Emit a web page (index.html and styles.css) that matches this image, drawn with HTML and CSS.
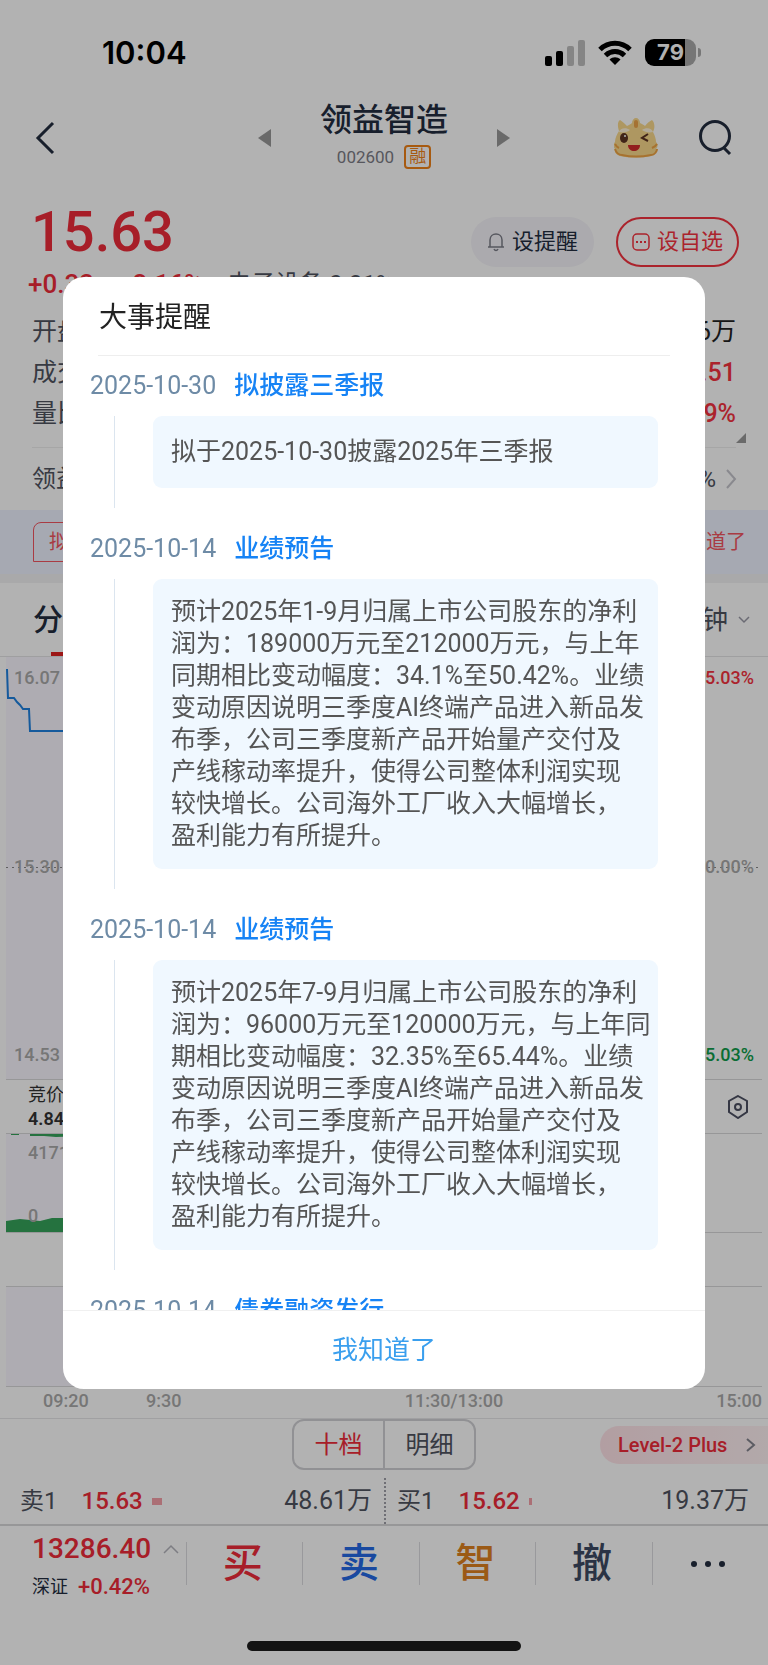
FILE: index.html
```html
<!DOCTYPE html>
<html lang="zh-CN">
<head>
  <meta charset="UTF-8">
  <meta name="viewport" content="width=device-width, initial-scale=1.0">
  <title>领益智造 002600</title>
  <link rel="stylesheet" href="styles.css">
</head>

<body>
  <div class="page">
    <!-- 状态栏 -->
    <div class="status">
      <span class="time">10:04</span>
      <div class="status-icons">
        <svg width="40" height="26" viewBox="0 0 40 26">
          <rect x="0" y="16" width="7" height="10" rx="2"/>
          <rect x="11" y="11" width="7" height="15" rx="2"/>
          <rect x="22" y="6" width="7" height="20" rx="2" opacity=".25"/>
          <rect x="33" y="0" width="7" height="26" rx="2" opacity=".25"/>
        </svg>
        <svg width="34" height="26" viewBox="0 0 34 26">
          <path d="M2 9.500C10.500 1.200 23.500 1.200 32 9.500M7.500 15.500C13 10.300 21 10.300 26.500 15.500" fill="none" stroke="#000" stroke-width="5"/>
          <path d="M17 25l-5.500-5.600c3.200-2.800 7.800-2.800 11 0z"/>
        </svg>
        <span class="battery"><b>79</b></span>
      </div>
    </div>

    <!-- 顶部标题 -->
    <header class="top">
      <button class="icon-btn" aria-label="返回">
        <svg width="20" height="34" viewBox="0 0 20 34"><path d="M18 2L3 17l15 15" fill="none" stroke="#232d3f" stroke-width="3"/></svg>
      </button>
      <div class="stock">
        <button class="icon-btn" aria-label="上一只">
          <svg width="13" height="18" viewBox="0 0 13 18"><path d="M13 0v18L0 9z" fill="#999"/></svg>
        </button>
        <div class="stock-name">
          <h1>领益智造</h1>
          <p>002600 <span class="rong">融</span></p>
        </div>
        <button class="icon-btn" aria-label="下一只">
          <svg width="13" height="18" viewBox="0 0 13 18"><path d="M0 0v18l13-9z" fill="#999"/></svg>
        </button>
      </div>
      <div class="top-right">
        <button class="icon-btn" aria-label="助手">
          <svg width="44" height="40" viewBox="0 0 44 40">
            <path d="M5 13C3 7 4 3 6 2c3 2 5 4 7 6 2-1 4-2 5-3 0-3 2-5 4-5s4 2 4 5c2 1 4 2 5 3 2-3 5-5 7-6 3 3 3 8 1 12 2 4 3 7 3 10 2 2 2 5 0 7 1 3-1 6-5 7-9 2-22 2-31 0-4-1-6-4-5-7-2-2-2-5 0-7 0-4 2-8 4-11z" fill="#f9d98c"/>
            <path d="M1 31c1 3 3 6 7 6 9 2 19 2 29 0 4 0 6-4 6-6M1 26c1 2 2 3 4 4M43 26c-1 2-3 3-5 4" fill="none" stroke="#efa445" stroke-width="2"/>
            <path d="M5 14c1-4 7-5 11-2-2 2-7 3-11 2zM28 12c4-3 10-2 11 2-4 1-8 0-11-2z" fill="#fff3da"/>
            <path d="M22 4v4" stroke="#eda44a" stroke-width="4" stroke-linecap="round"/>
            <ellipse cx="10" cy="20" rx="4" ry="5" fill="#5e3423"/>
            <circle cx="11" cy="18" r="1" fill="#fff"/>
            <path d="M34 16l-6 4 6 3" fill="none" stroke="#5e3423" stroke-width="2"/>
            <path d="M14 27h12c0 8-12 8-12 0z" fill="#d12b2b"/>
          </svg>
        </button>
        <button class="icon-btn" aria-label="搜索">
          <svg width="34" height="36" viewBox="0 0 34 36"><circle cx="16" cy="16" r="14.500" fill="none" stroke="#232d3f" stroke-width="3"/><path d="M24 27l7 7" stroke="#232d3f" stroke-width="3"/></svg>
        </button>
      </div>
    </header>

    <!-- 现价 -->
    <section class="price">
      <strong class="now">15.63</strong>
      <div class="price-btns">
        <button class="pill">
          <svg width="18" height="20" viewBox="0 0 18 20" fill="none" stroke="#7c7d88" stroke-width="1.500"><path d="M1 15h16M3 15V8c0-8 12-8 12 0v7M7 17c1 2 3 2 4 0"/></svg>
          设提醒
        </button>
        <button class="pill pill-red">
          <svg width="18" height="18" viewBox="0 0 18 18"><rect x="1" y="1" width="16" height="16" rx="4" fill="none" stroke="#f5333f" stroke-width="1.500"/><path d="M4 9h2M8 9h2M12 9h2" stroke="#f5333f" stroke-width="2"/></svg>
          设自选
        </button>
      </div>
    </section>

    <section class="quote">
      <p class="change"><b>+0.33</b><b>+2.16%</b><span>电子设备 0.31%</span></p>
      <dl>
        <div><dt>开盘</dt><dd>16万</dd></div>
        <div><dt>成交</dt><dd class="red">15.51</dd></div>
        <div><dt>量比</dt><dd class="red">9%</dd></div>
      </dl>
      <svg class="corner" width="10" height="10" viewBox="0 0 10 10"><path d="M10 0v10H0z" fill="#999"/></svg>
    </section>

    <a class="related" href="#">
      <span>领益转债</span>
      <span class="related-val">0.31%
        <svg width="12" height="20" viewBox="0 0 12 20"><path d="M2 1l8 9-8 9" fill="none" stroke="#c4c4cc" stroke-width="2"/></svg>
      </span>
    </a>

    <section class="notice">
      <span class="notice-tag">拟披露三季报</span>
      <a href="#">知道了</a>
    </section>

    <!-- 周期选项 -->
    <nav class="tabs">
      <a class="on" href="#">分时</a>
      <a class="minute" href="#">分钟
        <svg width="12" height="8" viewBox="0 0 12 8"><path d="M1 1l5 5 5-5" fill="none" stroke="#9a9aa6" stroke-width="1.500"/></svg>
      </a>
    </nav>

    <!-- 分时图 -->
    <section class="chart">
      <div class="plot">
        <svg class="line" width="160" height="80" viewBox="0 0 160 80"><path d="M1 12l1 29h6l3 4 3 3 3 4h6l1 22h136" fill="none" stroke="#1f82e0" stroke-width="2"/></svg>
        <div class="scale"><span>16.07</span><span class="red">5.03%</span></div>
        <div class="scale mid"><span>15.30</span><span>0.00%</span></div>
        <div class="scale"><span>14.53</span><span class="green">-5.03%</span></div>
      </div>
      <div class="legend">
        <p>竞价<br><b>4.84</b></p>
        <button class="icon-btn" aria-label="设置">
          <svg width="22" height="24" viewBox="0 0 22 24" fill="none" stroke="#4c5062" stroke-width="2"><path d="M11 1l9 5v11l-9 6-9-6V6z"/><circle cx="11" cy="12" r="3"/></svg>
        </button>
      </div>
      <div class="volume">
        <svg class="ticks" width="160" height="3" viewBox="0 0 160 3"><path d="M5 0h8v1H5zM24 0h136v2h-50l-4 1-6-1H80l-30 1-12-1H24z" fill="#35a45b"/></svg>
        <span>4171</span>
        <span>0</span>
        <svg class="bars" width="160" height="14" viewBox="0 0 160 14"><path d="M0 3l14-2 20 2 12-3 8-1 106 1v14H0z" fill="#35a45b"/></svg>
      </div>
      <div class="blank"></div>
      <div class="extra"></div>
      <div class="axis"><span>09:20</span><span>9:30</span><span>11:30/13:00</span><span>15:00</span></div>
    </section>

    <!-- 盘口 -->
    <section class="book">
      <div class="book-head">
        <div class="seg">
          <button class="on">十档</button>
          <button>明细</button>
        </div>
        <a class="level" href="#">Level-2 Plus
          <svg width="10" height="14" viewBox="0 0 10 14"><path d="M1 1l7 6-7 6" fill="none" stroke="#85858f" stroke-width="2"/></svg>
        </a>
      </div>
      <div class="orders">
        <div class="order"><span>卖1</span><b>15.63</b><i></i><em>48.61万</em></div>
        <div class="order buy"><span>买1</span><b>15.62</b><i></i><em>19.37万</em></div>
      </div>
    </section>

    <!-- 底部操作栏 -->
    <footer class="bottom">
      <div class="index">
        <p class="index-val">13286.40
          <svg width="16" height="10" viewBox="0 0 16 10"><path d="M1 9l7-7 7 7" fill="none" stroke="#b4b4bc" stroke-width="1.500"/></svg>
        </p>
        <p class="index-name">深证 <b>+0.42%</b></p>
      </div>
      <button class="act red">买</button>
      <button class="act blue">卖</button>
      <button class="act gold">智</button>
      <button class="act">撤</button>
      <button class="act" aria-label="更多">
        <svg width="36" height="8" viewBox="0 0 36 8" fill="#232d3f"><circle cx="4" cy="4" r="3"/><circle cx="18" cy="4" r="3"/><circle cx="32" cy="4" r="3"/></svg>
      </button>
    </footer>
    <div class="home-bar"></div>
  </div>

  <!-- 大事提醒弹窗 -->
  <div class="mask">
    <div class="dialog" role="dialog" aria-labelledby="dialog-title">
      <h2 id="dialog-title">大事提醒</h2>
      <div class="events">
        <article class="event">
          <h3><time>2025-10-30</time>拟披露三季报</h3>
          <div class="event-body"><p>拟于2025-10-30披露2025年三季报</p></div>
        </article>
        <article class="event">
          <h3><time>2025-10-14</time>业绩预告</h3>
          <div class="event-body">
            <p>预计2025年1-9月归属上市公司股东的净利<br>润为：189000万元至212000万元，与上年<br>同期相比变动幅度：34.1%至50.42%。业绩<br>变动原因说明三季度AI终端产品进入新品发<br>布季，公司三季度新产品开始量产交付及<br>产线稼动率提升，使得公司整体利润实现<br>较快增长。公司海外工厂收入大幅增长，<br>盈利能力有所提升。</p>
          </div>
        </article>
        <article class="event">
          <h3><time>2025-10-14</time>业绩预告</h3>
          <div class="event-body">
            <p>预计2025年7-9月归属上市公司股东的净利<br>润为：96000万元至120000万元，与上年同<br>期相比变动幅度：32.35%至65.44%。业绩<br>变动原因说明三季度AI终端产品进入新品发<br>布季，公司三季度新产品开始量产交付及<br>产线稼动率提升，使得公司整体利润实现<br>较快增长。公司海外工厂收入大幅增长，<br>盈利能力有所提升。</p>
          </div>
        </article>
        <article class="event">
          <h3><time>2025-10-14</time>债券融资发行</h3>
        </article>
      </div>
      <button class="ok">我知道了</button>
    </div>
  </div>
</body>
</html>
```

FILE: styles.css
```css
*{
  box-sizing: border-box;
}
html, body{
  margin: 0;
  padding: 0;
}
body{
  font: 24px/32px Roboto, "Noto Sans CJK SC", sans-serif;
  color: #50535f;
  background: #fff;
}
h1, h2, h3, p, dl, dd{
  margin: 0;
  font-weight: 400;
}
b, strong{
  font-weight: 500;
}
i, em{
  font-style: normal;
}
a{
  color: inherit;
  text-decoration: none;
}
button{
  padding: 0;
  border: none;
  background: none;
  font: inherit;
  color: inherit;
}
svg{
  display: block;
  flex-shrink: 0;
}

.red{ color: #f5333f; }
.green{ color: #0f9d4b; }

.page{
  min-height: 100vh;
  overflow: hidden;
}

/* 状态栏 */
.status{
  display: flex;
  justify-content: space-between;
  align-items: center;
  height: 102px;
  padding: 3px 72px 0 102px;
}
.time{
  font: 600 31px/40px Inter, sans-serif;
  color: #000;
}
.status-icons{
  display: flex;
  align-items: center;
  gap: 13px;
}
.battery{
  position: relative;
  width: 51px;
  height: 27px;
  border-radius: 9px;
  background: linear-gradient(90deg, #000 79%, #aaa 79%);
  font: 22px/27px Inter, sans-serif;
  color: #fff;
  text-align: center;
}
.battery b{
  font-weight: 700;
}
/* 电池头 */
.battery::after{
  content: "";
  position: absolute;
  top: 9px;
  right: -5px;
  width: 3px;
  height: 9px;
  border-radius: 0 4px 4px 0;
  background: #aaa;
}

/* 标题 */
.top{
  display: grid;
  grid-template-columns: 1fr auto 1fr;
  align-items: center;
  height: 66px;
  padding: 0 35px;
  margin-bottom: 31px;
}
.icon-btn{
  display: block;
}
.stock{
  display: flex;
  align-items: center;
  gap: 49px;
}
.stock-name{
  text-align: center;
}
.stock-name h1{
  font-size: 32px;
  line-height: 36px;
  font-weight: 500;
  color: #232d3f;
}
.stock-name p{
  display: flex;
  justify-content: center;
  align-items: center;
  gap: 10px;
  margin: 7px 0 4px;
  font-size: 17px;
  line-height: 24px;
  color: #7d7d86;
}
.rong{
  width: 27px;
  height: 24px;
  border: 2px solid #f08218;
  border-radius: 4px;
  font-size: 17px;
  line-height: 19px;
  color: #f08218;
}
.top-right{
  display: flex;
  justify-content: flex-end;
  align-items: center;
  gap: 41px;
}

/* 现价 */
.price{
  display: flex;
  justify-content: space-between;
  align-items: center;
  height: 66px;
  padding: 0 29px 0 31px;
}
.now{
  font-size: 56px;
  line-height: 64px;
  color: #f02c3a;
}
.price-btns{
  display: flex;
  gap: 22px;
  margin-top: 20px;
}
.pill{
  display: flex;
  justify-content: center;
  align-items: center;
  gap: 7px;
  width: 123px;
  height: 50px;
  border-radius: 25px;
  background: #f5f4f9;
  font-size: 22px;
  color: #232d3f;
}
.pill-red{
  border: 2px solid #f5333f;
  background: none;
  color: #f5333f;
}

.quote{
  position: relative;
  padding: 2px 32px 0;
}
.quote::after{
  content: "";
  display: block;
  height: 1px;
  margin-top: 13px;
  background: #eee;
}
.change{
  display: flex;
  gap: 24px;
  margin-left: -4px;
  line-height: 34px;
}
.change b{
  font-size: 26px;
  color: #f02c3a;
}
.quote dl{
  margin-top: 10px;
}
.quote dl div{
  display: flex;
  justify-content: space-between;
  font-size: 25px;
  line-height: 41px;
}
.quote dd{
  font-weight: 500;
}
.quote dd:not(.red){
  font-weight: 400;
  color: #222;
}
.corner{
  position: absolute;
  right: 22px;
  bottom: 5px;
}

.related{
  display: flex;
  justify-content: space-between;
  align-items: center;
  height: 62px;
  padding: 0 31px 0 32px;
}
.related-val{
  display: flex;
  align-items: center;
  gap: 9px;
}

.notice{
  display: flex;
  justify-content: space-between;
  align-items: center;
  height: 64px;
  padding: 0 22px 0 33px;
  background: #eef2ff;
  font-size: 20px;
  color: #f25560;
}
.notice-tag{
  padding: 0 15px;
  border: 1px solid #f25560;
  border-radius: 8px 8px 8px 0;
  line-height: 38px;
}

/* 周期选项 */
.tabs{
  display: flex;
  justify-content: space-between;
  height: 83px;
  padding: 0 18px 0 33px;
  border-top: 9px solid #f3f3f4;
  border-bottom: 1px solid #e4e4e6;
  line-height: 74px;
}
.tabs .on{
  position: relative;
  font-size: 30px;
  font-weight: 500;
  color: #232d3f;
}
.tabs .on::after{
  content: "";
  position: absolute;
  left: 18px;
  bottom: 0;
  width: 26px;
  height: 4px;
  background: #e02020;
}
.minute{
  display: flex;
  align-items: center;
  gap: 10px;
  font-size: 26px;
}

/* 分时图 */
.chart{
  padding: 0 6px;
  font-size: 18px;
  font-weight: 500;
  color: #aaa;
}
.plot{
  position: relative;
  display: flex;
  flex-direction: column;
  justify-content: space-between;
  height: 423px;
  padding: 11px 8px 14px;
  border-bottom: 1px solid #d8d8da;
  background: linear-gradient(90deg, #f9f7ff 160px, transparent 160px);
}
.line, .bars, .ticks{
  position: absolute;
  left: 0;
}
.line, .ticks{
  top: 0;
}
.scale{
  display: flex;
  justify-content: space-between;
  line-height: 20px;
}
/* 昨收虚线 */
.mid{
  margin: 0 -8px;
  padding: 0 8px;
  background: repeating-linear-gradient(90deg, #888 0 2px, transparent 2px 6px) 0 10px / 100% 1px no-repeat;
}
.legend{
  display: flex;
  justify-content: space-between;
  align-items: center;
  height: 54px;
  padding: 0 13px 0 22px;
  border-bottom: 1px solid #d8d8da;
  line-height: 24px;
  color: #333;
}
.legend b{
  font-weight: 600;
}
.volume{
  position: relative;
  display: flex;
  flex-direction: column;
  justify-content: space-between;
  height: 99px;
  padding: 9px 22px 6px;
  border-bottom: 1px solid #d8d8da;
  background: linear-gradient(90deg, #f9f7ff 160px, transparent 160px);
  line-height: 20px;
}
.volume span{
  position: relative;
  z-index: 1;
}
.bars{
  bottom: 0;
}
.blank{
  height: 54px;
  border-bottom: 1px solid #d8d8da;
}
.extra{
  height: 100px;
  border-bottom: 1px solid #d8d8da;
  background: linear-gradient(90deg, #f9f7ff 160px, transparent 160px);
}
.axis{
  display: grid;
  grid-template-columns: 103px 1fr 2fr 1fr;
  padding: 0 0 4px 37px;
  line-height: 27px;
}
.axis span:nth-child(3){
  text-align: center;
}
.axis span:last-child{
  text-align: right;
}

/* 盘口 */
.book{
  border-top: 1px solid #e6e6e8;
}
.book-head{
  display: grid;
  grid-template-columns: 1fr 184px 1fr;
  align-items: center;
}
.seg{
  grid-column: 2;
  display: flex;
  height: 51px;
  border: 2px solid #d0d0d4;
  border-radius: 12px;
}
.seg button{
  flex: 1;
}
.seg button + button{
  border-left: 2px solid #d0d0d4;
}
.seg .on{
  color: #f02c3a;
}
.level{
  display: flex;
  justify-content: space-between;
  align-items: center;
  justify-self: end;
  width: 168px;
  height: 38px;
  padding: 0 12px 0 18px;
  border-radius: 19px 0 0 19px;
  background: linear-gradient(90deg, #ffe3e8, #fff2f4);
  font-size: 20px;
  font-weight: 500;
  color: #f02c3a;
}
.orders{
  display: flex;
  height: 56px;
  padding: 8px 0 0;
  border-bottom: 2px solid #d8d8da;
}
.order{
  flex: 1;
  display: flex;
  align-items: center;
  padding: 0 12px 0 20px;
}
.order b{
  margin: 0 9px 0 24px;
  color: #f02c3a;
}
.order i{
  width: 10px;
  height: 7px;
  background: #f5a0a8;
}
.order em{
  margin-left: auto;
  font-size: 25px;
}
.buy{
  padding: 0 19px 0 11px;
  border-left: 2px dotted #a0a0a8;
}
.buy i{
  width: 3px;
}

/* 底部操作栏 */
.bottom{
  display: flex;
  align-items: flex-start;
  height: 87px;
  padding-top: 4px;
  color: #3d4a63;
}
.index{
  width: 186px;
  padding-left: 32px;
}
.index-val{
  display: flex;
  align-items: center;
  gap: 12px;
  font-size: 28px;
  line-height: 38px;
  font-weight: 500;
  color: #f02c3a;
}
.index-name{
  display: flex;
  gap: 10px;
  font-size: 18px;
  line-height: 38px;
  color: #232d3f;
}
.index-name b{
  font-size: 22px;
  color: #f02c3a;
}
.act{
  flex: 1;
  display: flex;
  justify-content: center;
  align-items: center;
  height: 43px;
  margin-top: 12px;
  padding-right: 4px;
  border-left: 1px solid #dcdce0;
  font-size: 40px;
  line-height: 43px;
  font-weight: 500;
}
.act.red{ color: #f02c3a; }
.act.blue{ color: #2569e6; }
.act.gold{ color: #df821f; }

.home-bar{
  width: 274px;
  height: 10px;
  margin: 28px auto 14px;
  border-radius: 5px;
  background: #1c1c1c;
}

/* 弹窗 */
.mask{
  position: fixed;
  inset: 0;
  z-index: 10;
  display: flex;
  justify-content: center;
  align-items: center;
  padding: 0 63px;
  background: rgba(0, 0, 0, .3);
}
.dialog{
  display: flex;
  flex-direction: column;
  width: 100%;
  height: calc(100vh - 553px);
  border-radius: 21px;
  background: #fff;
  overflow: hidden;
}
.dialog h2{
  margin: 0 35px;
  padding: 22px 1px 19px;
  border-bottom: 1px solid #eee;
  font-size: 28px;
  line-height: 37px;
  color: #222;
}
.events{
  flex: 1;
  min-height: 0;
  overflow: hidden;
}
.event{
  padding: 0 47px 0 27px;
  margin-bottom: 11px;
}
.event h3{
  display: flex;
  gap: 18px;
  font-size: 25px;
  line-height: 60px;
  font-weight: 500;
  color: #1683f5;
}
.event time{
  font-weight: 400;
  color: #6e8ba6;
}
.event-body{
  margin-left: 24px;
  padding: 0 0 20px 38px;
  border-left: 1px solid #dbe5ef;
}
.event-body p{
  padding: 17px 10px 17px 18px;
  border-radius: 9px;
  background: #f0f8ff;
  font-size: 25px;
  color: #555;
  white-space: nowrap;
}
.event:first-child p{
  padding: 20px 18px;
}
.ok{
  height: 79px;
  border-top: 1px solid #f0f0f0;
  font-size: 26px;
  color: #3a9fee;
}
```
